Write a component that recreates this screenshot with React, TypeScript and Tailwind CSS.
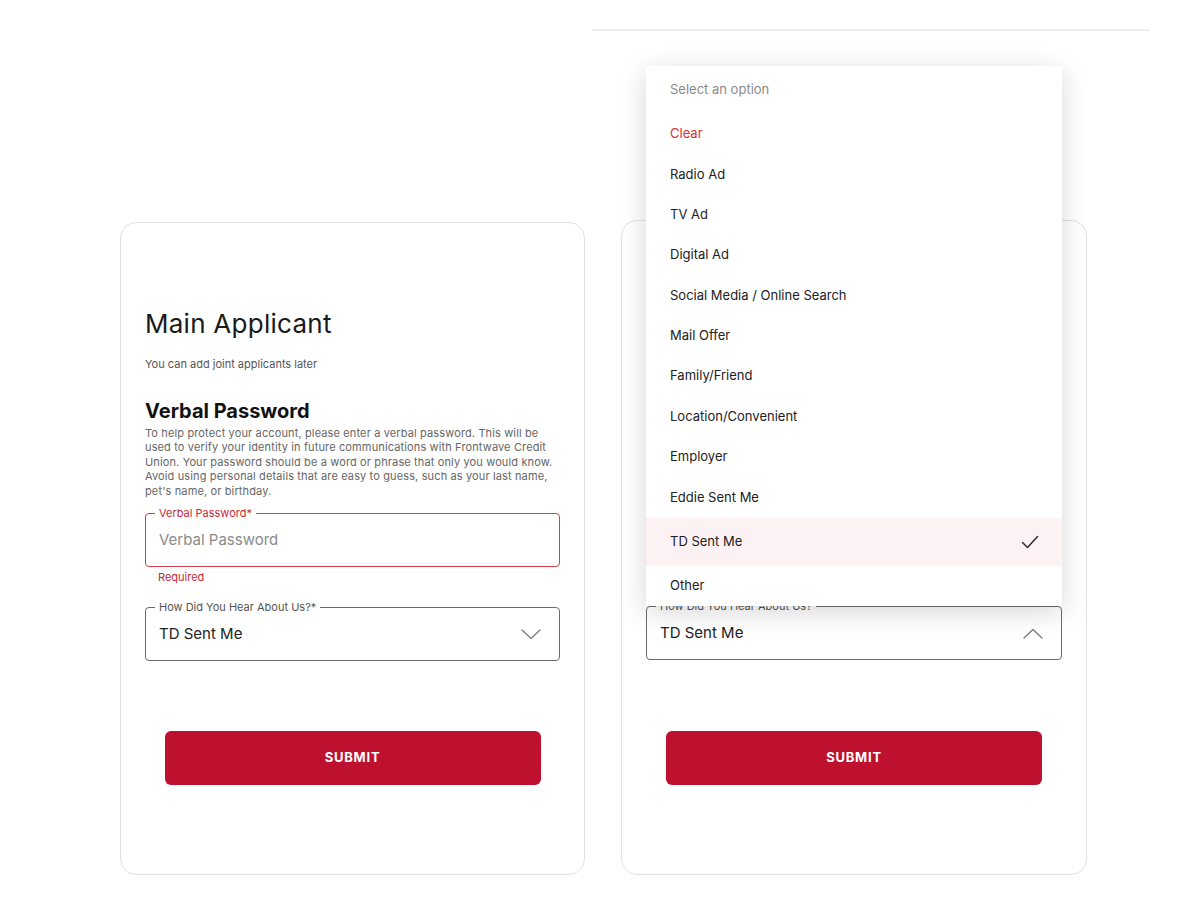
import type { ReactNode } from 'react';

const OPTIONS = [
  'Radio Ad',
  'TV Ad',
  'Digital Ad',
  'Social Media / Online Search',
  'Mail Offer',
  'Family/Friend',
  'Location/Convenient',
  'Employer',
  'Eddie Sent Me',
];

const FONT = { fontFamily: 'Inter, "Noto Sans", Arial, sans-serif' };

function Chevron({ up = false }: { up?: boolean }) {
  return (
    <svg width="20" height="11" viewBox="0 0 20 11" fill="none" className="shrink-0">
      <path
        d={up ? 'M1 10L10 1.5L19 10' : 'M1 1L10 9.5L19 1'}
        stroke="#7a7a7a"
        strokeWidth="1.3"
        strokeLinecap="round"
        strokeLinejoin="round"
      />
    </svg>
  );
}

function Check() {
  return (
    <svg width="18" height="14" viewBox="0 0 18 14" fill="none">
      <path d="M1.5 7.5L6.5 12.5L16.5 1.5" stroke="#333" strokeWidth="1.6" strokeLinecap="round" strokeLinejoin="round" />
    </svg>
  );
}

function Outlined({
  label,
  tone = 'gray',
  children,
}: {
  label: string;
  tone?: 'gray' | 'red';
  children: ReactNode;
}) {
  const red = tone === 'red';
  return (
    <div
      className={`relative h-[54px] rounded-[4px] border flex items-center pl-[13px] pr-[18px] ${
        red ? 'border-[#d4404f]' : 'border-[#6b6b6b]'
      }`}
    >
      <span
        className={`absolute left-[9px] -top-[8px] bg-white px-[4px] text-[11px] leading-[14px] ${
          red ? 'text-[#c8283a]' : 'text-[#555]'
        }`}
      >
        {label}
      </span>
      {children}
    </div>
  );
}

function SubmitButton() {
  return (
    <button className="mx-auto flex h-[54px] w-[376px] items-center justify-center rounded-[6px] bg-[#be1130] text-[13px] font-bold tracking-[0.06em] text-white">
      SUBMIT
    </button>
  );
}

function OptionMenu() {
  return (
    <div className="absolute bottom-full left-0 z-10 w-full rounded-[3px] bg-white shadow-[0_6px_28px_rgba(0,0,0,0.16)]">
      <div className="flex h-[48px] items-center px-[24px] text-[13px] text-[#8a8a8a]">Select an option</div>
      <div className="flex h-[40px] items-center px-[24px] text-[13px] text-[#d8303f]">Clear</div>
      {OPTIONS.map(o => (
        <div key={o} className="flex h-[40.4px] items-center px-[24px] text-[13px] text-[#222]">
          {o}
        </div>
      ))}
      <div className="flex h-[48px] items-center justify-between bg-[#fcf1f3] pl-[24px] pr-[23px] text-[13px] text-[#222]">
        <span>TD Sent Me</span>
        <Check />
      </div>
      <div className="flex h-[40.4px] items-center px-[24px] text-[13px] text-[#222]">Other</div>
    </div>
  );
}

export default function App() {
  return (
    <div className="min-h-screen bg-white text-[#222]" style={FONT}>
      <div className="ml-[592px] mt-[29px] h-[2px] w-[558px] bg-[#eeeeee]" />

      <div className="mt-[189px] flex items-end gap-[36px] pl-[120px]">
        {/* left card */}
        <div className="h-[653px] w-[465px] rounded-[16px] border border-[#e2e2e2] px-[24px] pt-[85px]">
          <h1 className="text-[26px] leading-[32px] font-normal tracking-[0.01em] text-[#1a1a1a]">Main Applicant</h1>
          <p className="mt-[17px] text-[11px] leading-[14px] text-[#555]">You can add joint applicants later</p>

          <h2 className="mt-[28px] text-[20px] leading-[24px] font-bold text-[#111]">Verbal Password</h2>
          <p className="mt-[3px] pr-[6px] text-[11px] leading-[14.4px] tracking-[0.012em] text-[#666]">
            To help protect your account, please enter a verbal password. This will be used to verify your identity in
            future communications with Frontwave Credit Union. Your password should be a word or phrase that only you
            would know. Avoid using personal details that are easy to guess, such as your last name, pet's name, or
            birthday.
          </p>

          <div className="mt-[15px]">
            <Outlined label="Verbal Password*" tone="red">
              <span className="text-[15px] text-[#8a8a8a]">Verbal Password</span>
            </Outlined>
          </div>
          <p className="mt-[3px] pl-[13px] text-[11px] leading-[14px] text-[#c8283a]">Required</p>

          <div className="mt-[23px]">
            <Outlined label="How Did You Hear About Us?*">
              <span className="flex-1 text-[15px] text-[#222]">TD Sent Me</span>
              <Chevron />
            </Outlined>
          </div>

          <div className="mt-[70px]">
            <SubmitButton />
          </div>
        </div>

        {/* right card, select opened */}
        <div className="flex h-[655px] w-[466px] flex-col justify-end rounded-[16px] border border-[#e2e2e2] px-[24px] pb-[89px]">
          <div className="relative">
            <OptionMenu />
            <Outlined label="How Did You Hear About Us?">
              <span className="flex-1 text-[15px] text-[#222]">TD Sent Me</span>
              <Chevron up />
            </Outlined>
          </div>
          <div className="mt-[71px]">
            <SubmitButton />
          </div>
        </div>
      </div>
    </div>
  );
}
